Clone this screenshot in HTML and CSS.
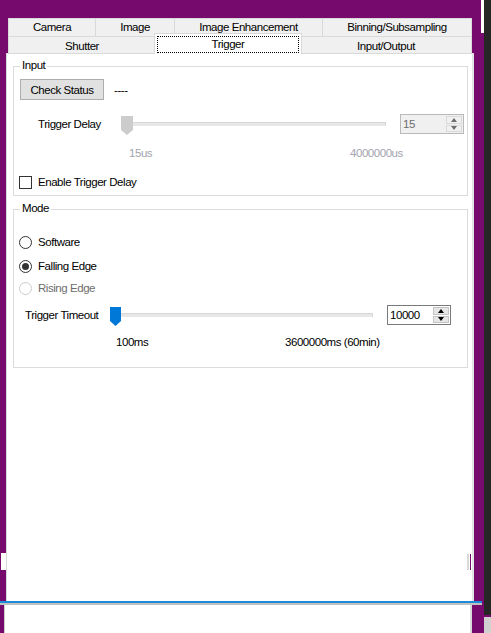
FILE: index.html
```html
<!DOCTYPE html>
<html>
<head>
<meta charset="utf-8">
<link rel="stylesheet" href="styles.css">
</head>
<body>
<div class="screen">
  <div class="window">
    <span class="mark mark-top"></span>
    <span class="mark mark-left"></span>
    <span class="mark mark-right-a"></span>
    <span class="mark mark-right-b"></span>

    <div class="tabs">
      <div class="tabrow row1">
        <div class="tab tab-camera">Camera</div>
        <div class="tab tab-image">Image</div>
        <div class="tab tab-enh">Image Enhancement</div>
        <div class="tab tab-bin">Binning/Subsampling</div>
      </div>
      <div class="tabrow row2">
        <div class="tab tab-shutter">Shutter</div>
        <div class="tab tab-trigger selected"><span class="focus">Trigger</span></div>
        <div class="tab tab-io">Input/Output</div>
      </div>
    </div>

    <div class="panel">
      <div class="group group-input">
        <div class="group-title">Input</div>
        <div class="row row-status">
          <div class="button">Check Status</div>
          <span class="status">----</span>
        </div>
        <div class="row row-slider">
          <span class="slider-label delay-label">Trigger Delay</span>
          <div class="slider delay-slider">
            <div class="track"></div>
            <svg class="thumb thumb-gray" width="12" height="19" viewBox="0 0 12 19"><path d="M0 0H12V14L6 19L0 14Z" fill="#cccccc"/></svg>
          </div>
          <div class="spin spin-disabled">
            <span class="spin-text">15</span>
            <span class="spin-btns"><span class="spin-up"></span><span class="spin-down"></span></span>
          </div>
        </div>
        <div class="row row-range range-delay disabled-text">
          <span class="range-min">15us</span>
          <span class="range-max">4000000us</span>
        </div>
        <div class="row row-option row-check">
          <span class="checkbox"></span>
          <span class="option-label">Enable Trigger Delay</span>
        </div>
      </div>

      <div class="group group-mode">
        <div class="group-title">Mode</div>
        <div class="row row-option row-software">
          <span class="radio"></span>
          <span class="option-label">Software</span>
        </div>
        <div class="row row-option row-falling">
          <span class="radio checked"></span>
          <span class="option-label">Falling Edge</span>
        </div>
        <div class="row row-option row-rising disabled">
          <span class="radio"></span>
          <span class="option-label">Rising Edge</span>
        </div>
        <div class="row row-slider row-timeout">
          <span class="slider-label timeout-label">Trigger Timeout</span>
          <div class="slider timeout-slider">
            <div class="track"></div>
            <svg class="thumb thumb-blue" width="11" height="19" viewBox="0 0 11 19"><path d="M0 0H11V14L5.5 19L0 14Z" fill="#0078d7"/></svg>
          </div>
          <div class="spin spin-active">
            <span class="spin-text">10000</span>
            <span class="spin-btns"><span class="spin-up"></span><span class="spin-down"></span></span>
          </div>
        </div>
        <div class="row row-range range-timeout">
          <span class="range-min">100ms</span>
          <span class="range-max">3600000ms (60min)</span>
        </div>
      </div>
    </div>

    <div class="accent-line"></div>
    <div class="shadow-line"></div>
    <div class="lower"></div>
  </div>
  <div class="edge">
    <div class="edge-dark"></div>
    <div class="edge-line"></div>
    <div class="edge-light"></div>
  </div>
</div>
</body>
</html>
```

FILE: styles.css
```css
* { box-sizing: border-box; }
html, body { margin: 0; padding: 0; }
body {
  width: 491px;
  height: 633px;
  overflow: hidden;
  font-family: "Liberation Sans", Arial, sans-serif;
  font-size: 11.5px;
  letter-spacing: -0.45px;
  color: #000;
  background: #770b6d;
}
.screen { display: flex; width: 491px; height: 633px; }
.window {
  position: relative;
  width: 484px;
  display: flex;
  flex-direction: column;
  background: #770b6d;
  padding-top: 18px;
}
.edge { width: 7px; display: flex; flex-direction: column; }
.edge-dark { flex: 1; background: #262626; }
.edge-line { height: 2px; background: #770b6d; }
.edge-light { height: 16px; background: #d0d0d0; }

/* overlay artifacts */
.mark { position: absolute; display: block; }
.mark-top { left: 481px; top: 0; width: 3px; height: 33px; background: #fff; }
.mark-left { left: 1px; top: 553px; width: 5px; height: 17px; background: #fff; }
.mark-right-a { left: 467px; top: 554px; width: 2px; height: 16px; background: #d9d9d9; z-index: 2; }
.mark-right-b { left: 470px; top: 554px; width: 1px; height: 16px; background: #770b6d; z-index: 2; }

/* tabs */
.tabs { margin-left: 8px; width: 464px; display: flex; flex-direction: column; }
.tabrow { display: flex; }
.tab {
  display: flex;
  align-items: center;
  justify-content: center;
  background: #f0f0f0;
  border-right: 1px solid #d9d9d9;
  white-space: nowrap;
}
.tabrow .tab:first-child { border-left: 1px solid #d9d9d9; }
.row1 .tab { height: 19px; border-top: 1px solid #d9d9d9; border-bottom: 1px solid #d9d9d9; padding-bottom: 1px; }
.row2 .tab { height: 16px; }
.tab-camera { width: 88px; }
.tab-image { width: 79px; }
.tab-enh { width: 148px; }
.tab-bin { width: 149px; }
.tab-shutter { width: 148px; padding-top: 1px; }
.tab-io { width: 171px; padding-top: 1px; }
.tab.selected {
  position: relative;
  z-index: 1;
  width: 148px;
  height: 21px;
  margin: -4px -1px -1px -2px;
  background: #fff;
  border: 1px solid #d9d9d9;
  border-bottom: none;
  padding: 2px 2px 1px 2px;
  align-items: stretch;
}
.focus {
  flex: 1;
  display: flex;
  align-items: center;
  justify-content: center;
  border: 1px dotted #000;
  padding-bottom: 1px;
}

/* panel */
.panel {
  margin-left: 6px;
  width: 468px;
  height: 548px;
  flex: none;
  background: #fff;
  border-top: 1px solid #d9d9d9;
  border-left: 1px solid #d9d9d9;
  border-right: 2px solid #e3e3e3;
  padding-top: 12px;
}
.group {
  margin-left: 6px;
  width: 455px;
  border: 1px solid #dcdcdc;
}
.group-input { padding-bottom: 6px; }
.group-mode { margin-top: 13px; padding-bottom: 18px; }
.group-title {
  margin: -8px 0 0 6px;
  padding: 0 2px;
  width: max-content;
  height: 13px;
  line-height: 13px;
  background: #fff;
}
.row { display: flex; align-items: center; }

.row-status { margin-top: 7px; height: 21px; }
.button {
  margin-left: 6px;
  width: 84px;
  height: 21px;
  display: flex;
  align-items: center;
  justify-content: center;
  background: #e1e1e1;
  border: 1px solid #adadad;
}
.status { margin-left: 10px; }

.row-slider { align-items: flex-start; height: 21px; margin-top: 14px; }
.row-timeout { margin-top: 10px; }
.slider-label { line-height: 20px; }
.delay-label { padding-left: 24px; width: 107px; }
.timeout-label { padding-left: 11px; width: 96px; }
.slider { position: relative; height: 21px; }
.delay-slider { width: 265px; }
.timeout-slider { width: 263px; }
.track {
  margin: 8px 0 0 2px;
  height: 4px;
  background: #e7e7e7;
  border: 1px solid #d6d6d6;
  border-bottom-color: #e7e7e7;
}
.thumb { position: absolute; left: 0; top: 2px; display: block; }

.spin {
  margin-left: 14px;
  width: 64px;
  height: 20px;
  display: flex;
  border: 1px solid #7a7a7a;
  background: #fff;
}
.spin-disabled { border-color: #b9b9b9; background: #f0f0f0; color: #6d6d6d; }
.spin-text { flex: 1; padding-left: 2px; line-height: 18px; }
.spin-btns {
  width: 16px;
  margin: 1px 1px 1px 0;
  display: flex;
  flex-direction: column;
  gap: 1px;
}
.spin-up, .spin-down {
  flex: 1;
  display: flex;
  align-items: center;
  justify-content: center;
  background: #e6e6e6;
  border: 1px solid #c4c4c4;
}
.spin-disabled .spin-up, .spin-disabled .spin-down { background: #f0f0f0; border-color: #dadada; }
.spin-up::before, .spin-down::before {
  content: "";
  width: 0;
  height: 0;
  border-left: 3.5px solid transparent;
  border-right: 3.5px solid transparent;
}
.spin-up::before { border-bottom: 4px solid #000; }
.spin-down::before { border-top: 4px solid #000; }
.spin-disabled .spin-up::before { border-bottom-color: #6d6d6d; }
.spin-disabled .spin-down::before { border-top-color: #6d6d6d; }

.row-range { height: 14px; margin-top: 11px; }
.range-delay .range-min { padding-left: 115px; width: 336px; }
.range-timeout { margin-top: 9px; }
.range-timeout .range-min { padding-left: 102px; width: 271px; }
.disabled-text { color: #a3a3ad; }

.row-option { height: 14px; }
.row-check { margin-top: 15px; }
.row-software { margin-top: 20px; }
.row-falling { margin-top: 10px; }
.row-rising { margin-top: 8px; }
.option-label { margin-left: 6px; }
.checkbox {
  margin-left: 5px;
  width: 13px;
  height: 13px;
  border: 1px solid #333;
  background: #fff;
}
.radio {
  margin-left: 5px;
  width: 13px;
  height: 13px;
  border: 1px solid #333;
  border-radius: 50%;
  background: #fff;
  display: flex;
  align-items: center;
  justify-content: center;
}
.radio.checked::before {
  content: "";
  width: 7px;
  height: 7px;
  border-radius: 50%;
  background: #333;
}
.disabled .radio { border-color: #cccccc; }
.disabled .option-label { color: #6d6d6d; }

/* bottom */
.accent-line { width: 482px; height: 2px; background: #1a8ad9; }
.shadow-line { width: 482px; height: 2px; background: #c0c0c0; }
.lower {
  flex: 1;
  margin-left: 4px;
  width: 468px;
  background: #fff;
  border-left: 1px solid #cfcfcf;
  border-right: 2px solid #d9d9d9;
}
```
